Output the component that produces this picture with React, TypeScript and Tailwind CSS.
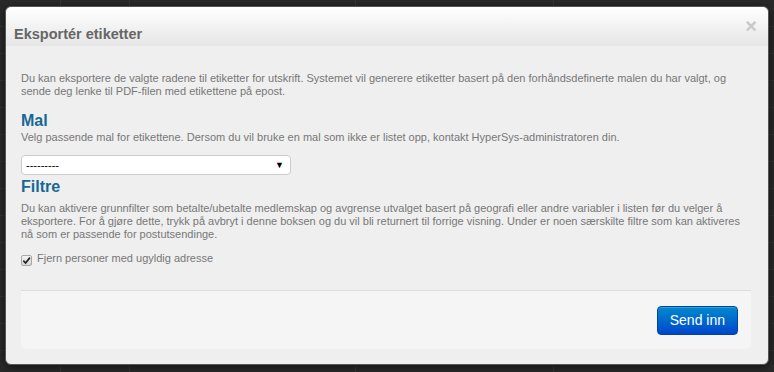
import React from "react";

const rows = Array.from({ length: 14 });

function BackdropTable() {
  // faded table behind the modal
  return (
    <div className="flex flex-col">
      {rows.map((_, i) => (
        <div key={i} className="flex h-[27px] border-b border-[#333]">
          <div className="w-[61px] border-r border-[#363636]" />
          <div className="w-[69px] border-r border-[#363636]" />
          <div className="w-[226px] border-r border-[#363636]" />
          <div className="w-[198px] border-r border-[#363636]" />
          <div className="flex-1" />
        </div>
      ))}
    </div>
  );
}

export default function App() {
  return (
    <div
      className="relative h-[372px] w-full overflow-hidden bg-[#2a2a2a]"
      style={{ fontFamily: '"Liberation Sans", Arial, sans-serif' }}
    >
      <BackdropTable />

      <div className="absolute left-[5px] top-[6px] flex h-[359px] w-[764px] flex-col rounded-md border border-[#555] bg-[#efefef] shadow-[0_2px_8px_rgba(0,0,0,0.6)]">
        {/* header */}
        <div className="flex h-[39px] items-end justify-between rounded-t-md bg-gradient-to-b from-white to-[#e6e6e6] pb-[2px] pl-[8px] pr-[11px]">
          <h3 className="text-[14.5px] font-bold leading-[20px] text-[#666]">Eksportér etiketter</h3>
          <button className="mb-[8px] text-[20px] font-bold leading-[20px] text-[#c8c8c8]">×</button>
        </div>

        {/* body */}
        <div className="flex flex-1 flex-col px-[15px] pt-[26px] text-[11px] leading-[13px] text-[#777]">
          <p>
            Du kan eksportere de valgte radene til etiketter for utskrift. Systemet vil generere etiketter basert på den forhåndsdefinerte malen du har valgt, og sende deg lenke til PDF-filen med etikettene på epost.
          </p>

          <h4 className="mt-[13px] text-[16px] font-bold leading-[20px] text-[#166895]">Mal</h4>
          <p>Velg passende mal for etikettene. Dersom du vil bruke en mal som ikke er listet opp, kontakt HyperSys-administratoren din.</p>

          <div className="mt-[11px] flex h-[20px] w-[270px] items-center justify-between rounded-[4px] border border-[#ccc] bg-white pl-[4px] pr-[6px] text-black">
            <span className="text-[11px] leading-none">---------</span>
            <span className="text-[9px] leading-none">▼</span>
          </div>

          <h4 className="mt-[2px] text-[16px] font-bold leading-[20px] text-[#166895]">Filtre</h4>
          <p className="mt-[5px]">
            Du kan aktivere grunnfilter som betalte/ubetalte medlemskap og avgrense utvalget basert på geografi eller andre variabler i listen før du velger å eksportere. For å gjøre dette, trykk på avbryt i denne boksen og du vil bli returnert til forrige visning. Under er noen særskilte filtre som kan aktiveres nå som er passende for postutsendinge.
          </p>

          <label className="mt-[11px] flex items-start gap-[5px]">
            <span className="mt-[3px] flex h-[11px] w-[11px] items-center justify-center rounded-[2px] border border-[#a8a8a8] bg-gradient-to-b from-[#f4f4f4] to-[#d6d6d6]">
              <svg viewBox="0 0 10 10" className="h-[9px] w-[9px]">
                <path d="M1.5 5.2 L4 7.8 L8.8 1.8" fill="none" stroke="#222" strokeWidth="1.8" />
              </svg>
            </span>
            <span>Fjern personer med ugyldig adresse</span>
          </label>

          {/* footer */}
          <div className="mr-[2px] mt-[24px] flex h-[59px] items-center justify-end rounded-b-md border-t border-[#dcdcdc] bg-[#f5f5f5] pr-[13px]">
            <button className="h-[29px] rounded-[4px] border border-[#0044aa] bg-gradient-to-b from-[#0088cc] to-[#0044cc] px-[12px] text-[14px] text-white shadow-[inset_0_1px_0_rgba(255,255,255,0.2)]">
              Send inn
            </button>
          </div>
        </div>
      </div>
    </div>
  );
}
